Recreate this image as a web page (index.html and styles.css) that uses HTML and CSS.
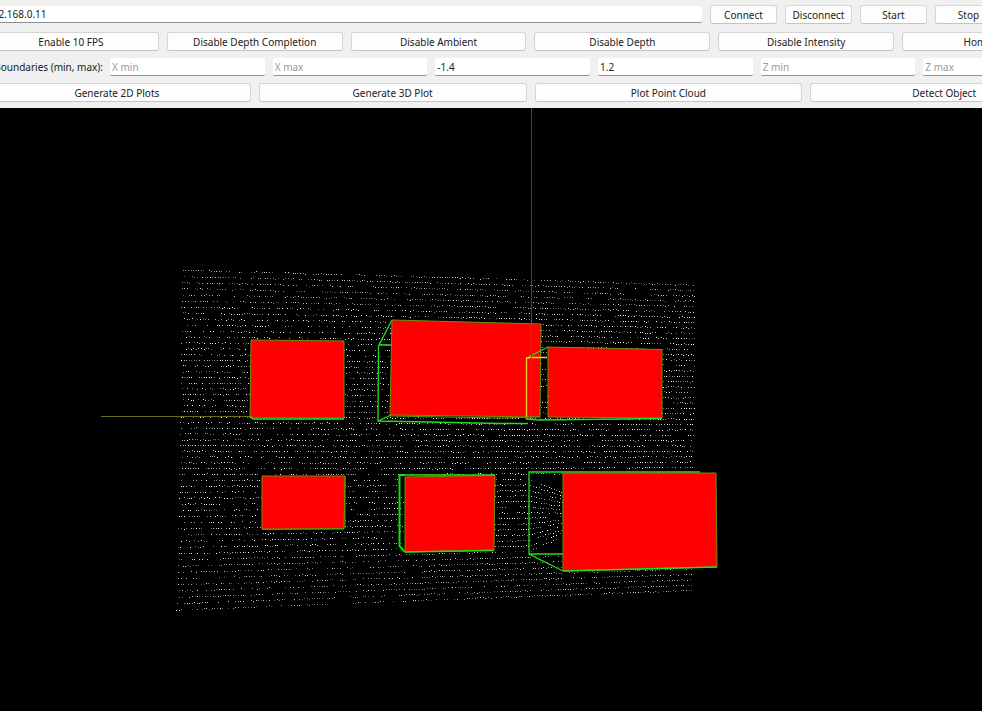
FILE: index.html
```html
<!DOCTYPE html>
<html lang="en">
<head>
<meta charset="utf-8">
<title>Point Cloud Viewer</title>
<link rel="stylesheet" href="styles.css">
</head>
<body>
<div class="toolbar">
  <div class="row row-connect">
    <input class="field field-address" type="text" value="192.168.0.11">
    <button class="btn btn-small">Connect</button>
    <button class="btn btn-small">Disconnect</button>
    <button class="btn btn-small">Start</button>
    <button class="btn btn-small">Stop</button>
  </div>
  <div class="row">
    <button class="btn">Enable 10 FPS</button>
    <button class="btn">Disable Depth Completion</button>
    <button class="btn">Disable Ambient</button>
    <button class="btn">Disable Depth</button>
    <button class="btn">Disable Intensity</button>
    <button class="btn">Home View</button>
  </div>
  <div class="row row-fields">
    <label class="field-label">Boundaries (min, max):</label>
    <input class="field" type="text" placeholder="X min">
    <input class="field" type="text" placeholder="X max">
    <input class="field" type="text" value="-1.4">
    <input class="field" type="text" value="1.2">
    <input class="field" type="text" placeholder="Z min">
    <input class="field" type="text" placeholder="Z max">
  </div>
  <div class="row">
    <button class="btn">Generate 2D Plots</button>
    <button class="btn">Generate 3D Plot</button>
    <button class="btn">Plot Point Cloud</button>
    <button class="btn">Detect Object</button>
  </div>
</div>
<div class="viewport">
  <canvas id="cloud" class="layer" width="982" height="603"></canvas>
  <svg class="layer" width="982" height="603" viewBox="0 108 982 603">
    <path class="axis-x" d="M101 416.5H252"/>

    <path class="wire" d="M379 345L392 320M379 345H392M378.500 345L378 421L391 415M378 421L500 423.500H528"/>
    <polygon class="box" points="392,320 541,324 540,417 390,415"/>
    <path class="edge" d="M390 416L500 418L540 417"/>

    <polygon class="box" points="251,340 344,341 344,418 250,418"/>
    <path class="wire" d="M250 416L253 419L344 419"/>

    <polygon class="box" points="548,347 662,349.500 662,418 548,417"/>
    <path class="wire" d="M526.500 358L548 347M526 419L540 420L662 418.500"/>
    <path class="wire-yellow" d="M526.500 417V358L530 357.500H547"/>

    <polygon class="box" points="262,476 345,476 344,529 262,529"/>
    <path class="edge" d="M262 529.500L344 528.500M345 476V528"/>

    <path class="wire-bold" d="M405 475H399.500V546L405 552"/>
    <polygon class="box" points="405,477 495,475.500 494,550 405,552"/>
    <path class="wire" d="M405 552L494 550.500M400 475L495 475"/>

    <path class="wire" d="M563 472L529 472V554L563 571M529 554H563M529 472H700"/>
    <polygon class="box" points="563,473 716,473 717,567 563,571"/>
    <path class="wire" d="M563 571L717 567"/>

    <path class="axis-y" d="M531.500 108V320"/>
    <path class="axis-y-over" d="M531.500 320V416"/>
  </svg>
</div>
<script src="cloud.js"></script>
</body>
</html>
```

FILE: styles.css
```css
html, body {
  margin: 0;
  height: 100%;
  overflow: hidden;
  background: #f0f0f0;
}

body {
  display: flex;
  flex-direction: column;
  font-family: "Noto Sans", "Open Sans", sans-serif;
  font-size: 10px;
  color: #222;
}

.toolbar {
  flex: none;
  width: 1095px;
  margin-left: -17px;
  padding: 5px 0 6px;
  display: flex;
  flex-direction: column;
  gap: 8px;
}

.row {
  display: flex;
  align-items: center;
  gap: 8px;
  height: 19px;
}

.row-connect {
  padding-right: 76px;
}

.row-fields {
  height: 18px;
  margin-top: -1px;
  margin-bottom: -1px;
}

.btn {
  flex: 1 1 0;
  min-width: 0;
  height: 19px;
  padding: 0;
  box-sizing: border-box;
  background: #fdfdfd;
  border: 1px solid #d4d4d4;
  border-bottom-color: #c4c4c4;
  border-radius: 3px;
  font: inherit;
  color: #222;
  white-space: nowrap;
}

.btn-small {
  flex: none;
  width: 67px;
}

.field {
  flex: 1 1 0;
  min-width: 0;
  height: 18px;
  box-sizing: border-box;
  padding: 0 2px;
  background: #fff;
  border: 0;
  border-bottom: 1px solid #8f8f8f;
  border-radius: 2px;
  font: inherit;
  color: #222;
  outline: none;
}

.field::placeholder {
  color: #9a9a9a;
  opacity: 1;
}

.field-address {
  height: 17px;
  padding: 0 4px;
}

.field-label {
  flex: none;
  width: 120px;
  margin-right: -1px;
  text-align: right;
  white-space: nowrap;
}

.viewport {
  flex: 1;
  position: relative;
  background: #000;
}

.layer {
  position: absolute;
  left: 0;
  top: 0;
  display: block;
}

.box {
  fill: #ff0000;
  stroke: #7c8c00;
  stroke-width: 1;
}

.wire, .wire-bold, .wire-yellow, .edge, .axis-x, .axis-y, .axis-y-over {
  fill: none;
}

.wire {
  stroke: #22dd22;
  stroke-width: 1.3;
}

.wire-bold {
  stroke: #00e600;
  stroke-width: 2;
}

.wire-yellow {
  stroke: #e8d820;
  stroke-width: 1.3;
}

.edge {
  stroke: #4fa000;
  stroke-width: 1;
}

.axis-x {
  stroke: #6e6e10;
  stroke-width: 1;
}

.axis-y {
  stroke: #0b6a0b;
  stroke-width: 1;
}

.axis-y-over {
  stroke: #7a5a00;
  stroke-width: 1;
}
```

FILE: cloud.js
```js
// Draws the lidar point cloud: curved scan rows of single-pixel returns.
(function () {
  var ctx = document.getElementById('cloud').getContext('2d');
  var OFFSET_Y = 108;
  var ROWS = 58;
  var seed = 20240611;

  function rand() {
    seed = (seed * 1664525 + 1013904223) % 4294967296;
    return seed / 4294967296;
  }

  for (var r = 0; r < ROWS; r++) {
    var v = r / (ROWS - 1);
    var on = true;
    var u = rand() * 0.006;
    while (u <= 1) {
      var left = 181 - 5 * v * v;
      var right = 695 - 3 * v;
      var x = left + (right - left) * u;
      var topY = 268 + 17 * u;
      var botY = 608 - 18 * u;
      var y = topY + (botY - topY) * v;
      // rows bow slightly near the left-hand edge
      y += (1 - u) * (1 - u) * 3 * Math.sin(v * 6.28 + 0.6) + (rand() - 0.5) * 0.9;

      // curved returns behind the large front-right object
      if (x > 529 && x < 563 && y > 476 && y < 552) {
        y += (x - 529) * 0.45 * ((514 - y) / 38);
      }

      // runs of returns broken by dropouts; the left side is sparser
      var keep = u < 0.45 ? 0.7 : 0.86;
      if (on && rand() > keep) on = false;
      else if (!on && rand() > 0.45) on = true;

      if (on) {
        var shade = rand();
        var a = shade < 0.35 ? 0.45 : shade < 0.7 ? 0.7 : 1;
        if (v > 0.85 || v < 0.1) a *= 0.8;
        ctx.fillStyle = 'rgba(255,255,255,' + a + ')';
        ctx.fillRect(Math.round(x), Math.round(y) - OFFSET_Y, 1, 1);
      }
      u += (2.3 + rand() * 0.5) / (right - left);
    }
  }
})();
```
